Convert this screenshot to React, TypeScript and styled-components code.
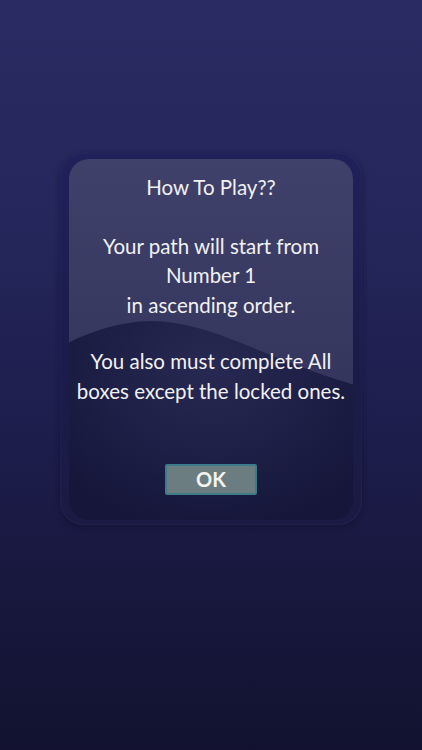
import styled, { createGlobalStyle } from 'styled-components'

const GlobalStyle = createGlobalStyle`
  html, body {
    margin: 0;
    padding: 0;
  }
  body {
    background: #16163a;
    font-family: Lato, "Open Sans", sans-serif;
  }
`

export default function App() {
  return (
    <>
      <GlobalStyle />
      <Screen>
        <DialogFrame>
          <Panel>
            <Gloss viewBox="0 0 284 362" preserveAspectRatio="none" aria-hidden>
              <defs>
                <linearGradient id="glossFill" x1="0" y1="0" x2="0" y2="1">
                  <stop offset="0" stopColor="#40416a" />
                  <stop offset="1" stopColor="#35365e" />
                </linearGradient>
              </defs>
              <path
                d="M0 0 H284 V226 C250 216 214 202 176 186 C136 170 104 160 70 163 C42 166 18 175 0 184 Z"
                fill="url(#glossFill)"
              />
            </Gloss>
            <Content>
              <Title>How To Play??</Title>
              <Paragraph>
                Your path will start from
                <br />
                Number 1
                <br />
                in ascending order.
              </Paragraph>
              <Paragraph>
                You also must complete All
                <br />
                boxes except the locked ones.
              </Paragraph>
              <OkButton type="button">OK</OkButton>
            </Content>
          </Panel>
        </DialogFrame>
      </Screen>
    </>
  )
}

const Screen = styled.div`
  height: 750px;
  box-sizing: border-box;
  padding-top: 153px;
  display: flex;
  justify-content: center;
  align-items: flex-start;
  background: linear-gradient(180deg, #2a2b62 0%, #25265b 30%, #1c1d4a 60%, #121230 100%);
`

const DialogFrame = styled.div`
  width: 302px;
  height: 372px;
  box-sizing: border-box;
  padding: 6px 9px 5px 9px;
  border-radius: 24px;
  background: linear-gradient(180deg, #20215a 0%, #1b1c4a 55%, #1a1b44 100%);
  box-shadow: 0 2px 6px rgba(10, 10, 35, 0.45), inset 0 0 2px rgba(60, 62, 120, 0.6);
`

const Panel = styled.div`
  position: relative;
  height: 100%;
  border-radius: 20px;
  overflow: hidden;
  background: radial-gradient(ellipse 70% 45% at 50% 58%, #282952 0%, #1e1f46 55%, #15163a 100%);
`

const Gloss = styled.svg`
  position: absolute;
  inset: 0;
  width: 100%;
  height: 100%;
`

const Content = styled.div`
  position: relative;
  display: flex;
  flex-direction: column;
  align-items: center;
  padding-top: 14px;
  color: #f1f1f3;
  text-align: center;
  font-family: Lato, "Open Sans", sans-serif;
  font-size: 20.5px;
  line-height: 29.5px;
`

const Title = styled.div`
  margin-bottom: 29px;
`

const Paragraph = styled.p`
  margin: 0 0 27px;
  white-space: nowrap;
`

const OkButton = styled.button`
  margin-top: 31px;
  width: 92px;
  height: 31px;
  box-sizing: border-box;
  border: 2px solid #3c7b8a;
  border-radius: 2px;
  background: #6b7d80;
  color: #f3f3f3;
  font-family: Lato, "Open Sans", sans-serif;
  font-weight: 700;
  font-size: 20px;
  line-height: 27px;
  padding: 0;
`
